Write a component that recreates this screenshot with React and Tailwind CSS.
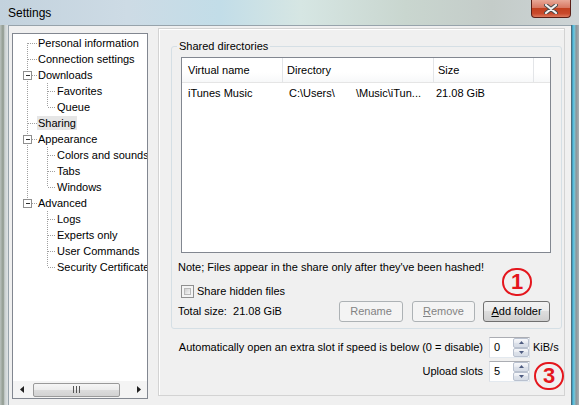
import React from "react";

const treeItems = [
  { label: "Personal information", level: 1, first: true },
  { label: "Connection settings", level: 1 },
  { label: "Downloads", level: 1, expand: true },
  { label: "Favorites", level: 2, rootCont: true },
  { label: "Queue", level: 2, rootCont: true, last: true },
  { label: "Sharing", level: 1, selected: true },
  { label: "Appearance", level: 1, expand: true },
  { label: "Colors and sounds", level: 2, rootCont: true },
  { label: "Tabs", level: 2, rootCont: true },
  { label: "Windows", level: 2, rootCont: true, last: true },
  { label: "Advanced", level: 1, expand: true, lastRoot: true },
  { label: "Logs", level: 2 },
  { label: "Experts only", level: 2 },
  { label: "User Commands", level: 2 },
  { label: "Security Certificates", level: 2, last: true },
];

const dot = {
  stroke: "#a0a0a0",
  strokeDasharray: "1 1",
  shapeRendering: "crispEdges",
};

function TreeRow({ item }) {
  const { label, level, expand, first, lastRoot, last, rootCont, selected } = item;
  const W = level === 1 ? 24 : 43;
  return (
    <div className="flex h-[16px] items-center">
      <svg width={W} height={16} className="shrink-0">
        {level === 1 && (
          <line x1="14.5" x2="14.5" y1={first ? 8 : 0} y2={lastRoot ? 8 : 16} style={dot} />
        )}
        {level === 1 && <line x1="15" x2="24" y1="8.5" y2="8.5" style={dot} />}
        {level === 1 && expand && (
          <g shapeRendering="crispEdges">
            <rect x="10.5" y="4.5" width="8" height="8" fill="#ffffff" stroke="#8f8f8f" />
            <line x1="12.5" x2="17" y1="8.5" y2="8.5" stroke="#303030" />
          </g>
        )}
        {level === 2 && rootCont && <line x1="14.5" x2="14.5" y1="0" y2="16" style={dot} />}
        {level === 2 && <line x1="34.5" x2="34.5" y1="0" y2={last ? 8 : 16} style={dot} />}
        {level === 2 && <line x1="35" x2="43" y1="8.5" y2="8.5" style={dot} />}
      </svg>
      <span
        className={
          selected
            ? "px-[1px] h-[14px] leading-[14px] whitespace-nowrap bg-[#e6e6e6]"
            : "px-[1px] h-[14px] leading-[14px] whitespace-nowrap"
        }
      >
        {label}
      </span>
    </div>
  );
}

function TreeView() {
  return (
    <div className="ml-[3px] mt-[7px] w-[136px] h-[366px] border border-[#828790] bg-white flex flex-col shrink-0">
      <div className="flex-1 pt-[1px] overflow-hidden">
        {treeItems.map((it) => (
          <TreeRow key={it.label} item={it} />
        ))}
      </div>
      <div className="h-[17px] flex bg-[#f4f4f4] shrink-0">
        <div className="w-[17px] flex items-center justify-center">
          <svg width="4" height="7">
            <path d="M4 0 L0 3.5 L4 7Z" fill="#202020" />
          </svg>
        </div>
        <div className="flex-1 flex items-center">
          <div className="ml-[3px] w-[87px] h-[14px] rounded-[2px] border border-[#9a9a9a] bg-[linear-gradient(#f6f6f6,#ececec_50%,#dcdcdc_50%,#d2d2d2)] flex items-center justify-center">
            <svg width="7" height="7" shapeRendering="crispEdges">
              <rect x="0" y="0" width="1" height="7" fill="#555" />
              <rect x="3" y="0" width="1" height="7" fill="#555" />
              <rect x="6" y="0" width="1" height="7" fill="#555" />
            </svg>
          </div>
        </div>
        <div className="w-[17px] flex items-center justify-center">
          <svg width="4" height="7">
            <path d="M0 0 L4 3.5 L0 7Z" fill="#202020" />
          </svg>
        </div>
      </div>
    </div>
  );
}

function Button({ children, disabled, className }) {
  return (
    <div
      className={
        (disabled
          ? "border-[#adb2b5] bg-[#f4f4f4] text-[#838383] "
          : "border-[#707070] bg-[linear-gradient(#f2f2f2,#ebebeb_50%,#dddddd_50%,#cfcfcf)] text-black ") +
        "h-[21px] border rounded-[3px] flex items-center justify-center leading-none " +
        className
      }
    >
      {children}
    </div>
  );
}

function SpinBtn({ up }) {
  return (
    <div className="flex-1 border border-[#b9c1cf] rounded-[2px] bg-[linear-gradient(#f7f8fb,#e7eaf0_50%,#dde2ea_50%,#d6dce6)] flex items-center justify-center">
      <svg width="5" height="3">
        {up ? (
          <path d="M0 3 L2.5 0 L5 3Z" fill="#4d5b80" />
        ) : (
          <path d="M0 0 L2.5 3 L5 0Z" fill="#4d5b80" />
        )}
      </svg>
    </div>
  );
}

function Spin({ value }) {
  return (
    <div className="w-[41px] h-[21px] border border-[#abadb3] border-l-[#dbdfe6] border-r-[#dbdfe6] border-b-[#e3e9ef] bg-white flex shrink-0">
      <div className="flex-1 pl-[4px] leading-[19px]">{value}</div>
      <div className="w-[16px] flex flex-col">
        <SpinBtn up />
        <SpinBtn />
      </div>
    </div>
  );
}

function Circled({ n }) {
  return (
    <div className="w-[30px] h-[28px] rounded-full border-2 border-[#e4161d] text-[#e4161d] font-bold text-[22px] leading-none flex items-center justify-center font-['Liberation_Sans',Arial,sans-serif]">
      {n}
    </div>
  );
}

function ListView() {
  return (
    <div className="ml-[9px] mt-[4px] w-[370px] h-[196px] border border-[#828790] bg-white flex flex-col">
      <div className="h-[25px] flex border-b border-[#e5e5e5] bg-[linear-gradient(#ffffff,#ffffff_60%,#f7f8f9)] shrink-0">
        <div className="w-[101px] border-r border-[#e3e5e8] pl-[6px] flex items-center">Virtual name</div>
        <div className="w-[151px] border-r border-[#e3e5e8] pl-[4px] flex items-center">Directory</div>
        <div className="w-[100px] border-r border-[#e3e5e8] pl-[4px] flex items-center">Size</div>
        <div className="flex-1" />
      </div>
      <div className="mt-[2px] h-[17px] flex items-center whitespace-nowrap">
        <div className="w-[101px] pl-[6px]">iTunes Music</div>
        <div className="w-[151px] flex">
          <span className="w-[73px] pl-[6px]">C:\Users\</span>
          <span>\Music\iTun...</span>
        </div>
        <div className="w-[100px] pl-[2px]">21.08 GiB</div>
      </div>
    </div>
  );
}

function RightPanel() {
  return (
    <div className="ml-[10px] mt-[2px] w-[407px] h-[368px] border border-[#d3d3d3] shadow-[inset_1px_1px_0_#ffffff] flex flex-col shrink-0">
      <fieldset className="ml-[12px] mt-[10px] w-[391px] h-[290px] border border-[#d5dfe5] rounded-[3px] flex flex-col">
        <legend className="ml-[5px] px-[2px] leading-[14px]">Shared directories</legend>
        <ListView />
        <div className="mt-[7px] flex">
          <div className="flex flex-col">
            <div className="pl-[6px] h-[14px] leading-[14px] whitespace-nowrap">
              Note; Files appear in the share only after they've been hashed!
            </div>
            <div className="mt-[10px] h-[14px] flex items-center pl-[9px]">
              <div className="w-[13px] h-[13px] border border-[#8f8f8f] bg-[#f4f4f4] p-[2px] shrink-0">
                <div className="w-full h-full border border-[#b9b9b9] bg-[linear-gradient(135deg,#cfcfcf,#f6f6f6)]" />
              </div>
              <span className="ml-[3px] leading-[14px]">Share hidden files</span>
            </div>
          </div>
          <div className="ml-auto mr-[29px] mt-[8px]">
            <Circled n="1" />
          </div>
        </div>
        <div className="mt-[3px] flex items-center">
          <span className="pl-[6px] whitespace-nowrap">Total size:&nbsp; 21.08 GiB</span>
          <Button disabled className="ml-auto w-[64px]">Rename</Button>
          <Button disabled className="ml-[9px] w-[63px]">
            <span>
              <span className="underline">R</span>emove
            </span>
          </Button>
          <Button className="ml-[8px] mr-[11px] w-[67px]">
            <span>
              <span className="underline">A</span>dd folder
            </span>
          </Button>
        </div>
      </fieldset>
      <div className="mt-[8px] flex items-start justify-end">
        <span className="leading-[21px] whitespace-nowrap">
          Automatically open an extra slot if speed is below (0 = disable)
        </span>
        <div className="ml-[6px]">
          <Spin value="0" />
        </div>
        <div className="w-[34px] pl-[3px] leading-[21px]">KiB/s</div>
      </div>
      <div className="mt-[3px] flex items-start justify-end">
        <span className="leading-[21px] whitespace-nowrap">Upload slots</span>
        <div className="ml-[6px]">
          <Spin value="5" />
        </div>
        <div className="w-[34px] pl-[4px] mt-[1px]">
          <Circled n="3" />
        </div>
      </div>
    </div>
  );
}

export default function App() {
  return (
    <div className="w-[579px] h-[405px] overflow-hidden flex flex-col font-['Liberation_Sans',Arial,sans-serif] text-[11px] text-black bg-[#c7d3db]">
      <div className="h-[25px] flex shrink-0 bg-[linear-gradient(90deg,#c3d2dd_0%,#cddbe5_22%,#c2dde8_38%,#d6e6e3_52%,#c9d6cf_70%,#c4ccc9_85%,#cdd4d6_100%)]">
        <div className="pl-[8px] pt-[1px] flex items-center text-[12px]">Settings</div>
        <div className="ml-auto mr-[8px] w-[40px] h-[18px] rounded-b-[4px] border border-t-0 border-[#5a1f17] bg-[linear-gradient(#e8a897,#d87862_45%,#c2401f_50%,#c94a2c_80%,#dd7a5e)] flex items-center justify-center">
          <svg width="14" height="10" viewBox="0 0 14 10">
            <path d="M2 1 L12 9 M12 1 L2 9" stroke="#4a4a4a" strokeWidth="4" strokeLinecap="round" />
            <path d="M2 1 L12 9 M12 1 L2 9" stroke="#f4f4f4" strokeWidth="2.2" strokeLinecap="round" />
          </svg>
        </div>
      </div>
      <div className="flex flex-1 min-h-0">
        <div className="w-[8px] shrink-0 bg-[linear-gradient(90deg,#b9c1bd,#8e988d_40%,#c9d0d0_60%,#dfe3e5)]" />
        <div className="flex-1 bg-[#f0f0f0] border-l border-t border-[#97a3ab] flex items-start">
          <TreeView />
          <RightPanel />
        </div>
        <div className="w-[8px] shrink-0 bg-[linear-gradient(90deg,#4a5560,#46b8de_25%,#74c6da_40%,#8c959a_65%,#a9b1b5)]" />
      </div>
    </div>
  );
}
